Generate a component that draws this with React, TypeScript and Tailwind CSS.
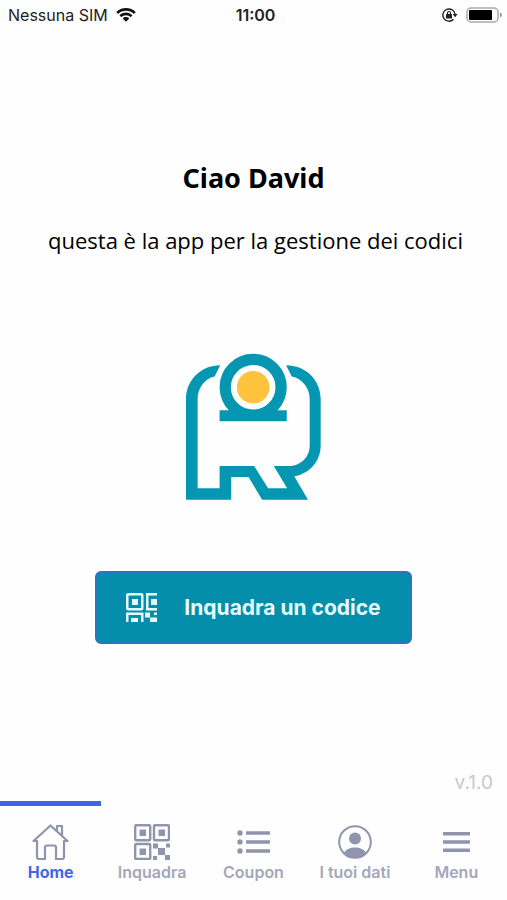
import React from 'react'

const TEAL = '#0597b2'

function WifiIcon() {
  return (
    <svg width="20" height="14" viewBox="0 0 20 14" fill="#111">
      <path d="M10 0C6.200 0 2.800 1.500.3 3.900l1.900 2C4.200 4 7 2.800 10 2.800S15.800 4 17.800 5.900l1.900-2C17.200 1.500 13.800 0 10 0Z" />
      <path d="M10 4.600c-2.500 0-4.800 1-6.500 2.600l1.900 2C6.600 8 8.200 7.300 10 7.300s3.400.7 4.600 1.900l1.900-2A9.400 9.400 0 0 0 10 4.600Z" />
      <path d="M10 9.100c-1.300 0-2.400.5-3.300 1.300L10 13.800l3.300-3.400A4.800 4.800 0 0 0 10 9.100Z" />
    </svg>
  )
}

function RotationLockIcon() {
  return (
    <svg width="16" height="14" viewBox="0 0 16 14" fill="none" stroke="#222">
      <path d="M13 6A6.100 6.100 0 1 0 11.500 11.200" strokeWidth="1.400" />
      <path d="M10.600 6h5l-2.500 3.300Z" fill="#222" stroke="none" />
      <rect x="4" y="6" width="6" height="4.500" rx=".6" fill="#222" stroke="none" />
      <path d="M5.500 6.200V5a1.500 1.500 0 0 1 3 0v1.200" strokeWidth="1.200" />
    </svg>
  )
}

function BatteryIcon() {
  return (
    <svg width="37" height="16" viewBox="0 0 37 16">
      <rect x="1" y="1" width="31" height="14" rx="4" fill="#fff" stroke="#aaa" strokeWidth="1.500" />
      <rect x="3" y="3" width="23" height="10" rx="1" fill="#000" />
      <path d="M34 5.500c2.500.8 2.500 4.200 0 5Z" fill="#999" />
    </svg>
  )
}

function Logo() {
  return (
    <svg width="135" height="147" viewBox="52 40 406 440" role="img" aria-label="Logo">
      <path
        fill={TEAL}
        d="M155 76C98 76 52 120 52 178V480H188V412H240L281 480H419L378 410C424 402 457 364 457 318V178C457 120 412 76 353 76L370 110C402 116 424 145 424 178V318C424 352 396 379 362 379H316L356 446H299L257 379H153V446H87V178C87 145 108 116 138 110Z"
      />
      <path fill={TEAL} d="M153 211H355V244H153Z" />
      <circle cx="254" cy="142" r="84" fill="#fff" stroke={TEAL} strokeWidth="34" />
      <circle cx="254" cy="142" r="49" fill="#ffc23d" />
    </svg>
  )
}

function ScanIcon() {
  return (
    <svg width="31" height="29" viewBox="0 0 31 29" fill="none" stroke="#e6fbff" strokeWidth="2.500">
      <rect x="1.250" y="1.250" width="15" height="15" rx="1" />
      <path d="M31 1.250H21.250V16.250H31M1.250 29V20.750H16.250V29" />
      <path d="M6 6H12V12H6ZM25 6H31V12H25ZM5 25H12V29H5ZM19 19.500H24V24.500H19ZM24 24.500H31V29H24ZM28 19.500H31V22H28Z" fill="#e6fbff" stroke="none" />
    </svg>
  )
}

function HomeIcon() {
  return (
    <svg width="37" height="36" viewBox="0 0 37 36" fill="none" stroke="currentColor" strokeWidth="2.200" strokeLinejoin="round" strokeLinecap="round">
      <path d="M1.500 17 18.500 1.500 35.500 17H32V33Q32 35 30 35H24V23Q24 21.500 22 21.500H15Q13 21.500 13 23V35H7Q5 35 5 33V17Z" />
      <path d="M25 7V2H30V11.500" />
    </svg>
  )
}

function QrIcon() {
  return (
    <svg width="36" height="36" viewBox="0 0 36 36" fill="none" stroke="currentColor" strokeWidth="2.400">
      <rect x="1.200" y="1.200" width="15" height="15" rx="1" />
      <rect x="20" y="1.200" width="15" height="15" rx="1" />
      <rect x="1.200" y="20" width="15" height="15" rx="1" />
      <path d="M5.500 5.500h6.500v6.500h-6.500ZM24.500 5.500h6.500v6.500h-6.500ZM5.500 24.500h6.500v6.500h-6.500ZM19 19.500h5v5h-5ZM24 24h7v7h-7ZM32 19.500h4v4h-4ZM19 32h4v4h-4ZM31 31h5v5h-5Z" fill="currentColor" stroke="none" />
    </svg>
  )
}

function ListIcon() {
  return (
    <svg width="33" height="24" viewBox="0 0 33 24" fill="currentColor">
      <circle cx="3" cy="3" r="2.700" />
      <circle cx="3" cy="12" r="2.700" />
      <circle cx="3" cy="21" r="2.700" />
      <path d="M9 1.300H33V4.700H9ZM9 10.300H33V13.700H9ZM9 19.300H33V22.700H9Z" />
    </svg>
  )
}

function UserIcon() {
  return (
    <svg width="34" height="34" viewBox="0 0 34 34" fill="currentColor">
      <circle cx="17" cy="17" r="15.800" fill="none" stroke="currentColor" strokeWidth="2" />
      <circle cx="17" cy="13.500" r="6" />
      <path d="M6 27.500C8 24.500 12 22.500 17 22.500S26 24.500 28 27.500C25 31 21 33 17 33S9 31 6 27.500Z" />
    </svg>
  )
}

function MenuIcon() {
  return (
    <svg width="27" height="22" viewBox="0 0 27 22" fill="currentColor">
      <path d="M0 1H27V4.500H0ZM0 9.200H27V12.700H0ZM0 17.500H27V21H0Z" />
    </svg>
  )
}

const tabs = [
  { label: 'Home', icon: <HomeIcon />, active: true },
  { label: 'Inquadra', icon: <QrIcon />, active: false },
  { label: 'Coupon', icon: <ListIcon />, active: false },
  { label: 'I tuoi dati', icon: <UserIcon />, active: false },
  { label: 'Menu', icon: <MenuIcon />, active: false },
]

function StatusBar() {
  return (
    <header className="grid h-[30px] grid-cols-3 items-center pr-1 pl-2 text-[#222]">
      <div className="flex items-center gap-2 text-base">
        <span className="whitespace-nowrap">Nessuna SIM</span>
        <WifiIcon />
      </div>
      <div className="text-center text-base font-semibold">11:00</div>
      <div className="flex items-center justify-end gap-2">
        <RotationLockIcon />
        <BatteryIcon />
      </div>
    </header>
  )
}

function TabBar() {
  return (
    <nav className="grid grid-cols-5">
      {tabs.map((tab) => (
        <a
          key={tab.label}
          href="#"
          aria-current={tab.active ? 'page' : undefined}
          className="flex h-[99px] flex-col items-center"
        >
          <span className={tab.active ? 'h-[5px] w-full bg-[#3b66e8]' : 'h-[5px] w-full'} />
          <span className="mt-4 flex h-[40px] items-center text-[#9094ad]">{tab.icon}</span>
          <span
            className={
              tab.active
                ? 'text-base leading-5 font-bold text-[#4169e1]'
                : 'text-base leading-5 font-semibold text-[#a4a7b8]'
            }
          >
            {tab.label}
          </span>
        </a>
      ))}
    </nav>
  )
}

export default function App() {
  return (
    <div className="flex min-h-screen flex-col bg-[#fefefe] font-[Inter,sans-serif]">
      <StatusBar />
      <main className="flex grow flex-col items-center">
        <h1 className="mt-[128px] font-['Noto_Sans',sans-serif] text-[27px] leading-10 font-bold text-black">
          Ciao David
        </h1>
        <p className="mt-[26px] pl-1 text-center font-['Open_Sans',sans-serif] text-[22px] leading-8 text-black">
          questa è la app per la gestione dei codici
        </p>
        <div className="mt-[97px]">
          <Logo />
        </div>
        <button
          type="button"
          className="mt-[71px] flex h-[73px] items-center gap-[27px] rounded-md border-2 border-[#2a74c5] bg-[#048eab] px-[29px] text-[21px] font-bold text-[#e6fbff]"
        >
          <ScanIcon />
          Inquadra un codice
        </button>
        <p className="mt-auto mb-1 self-end pr-[14px] text-[19px] leading-7 text-[#c8c8cc]">v.1.0</p>
      </main>
      <TabBar />
    </div>
  )
}
